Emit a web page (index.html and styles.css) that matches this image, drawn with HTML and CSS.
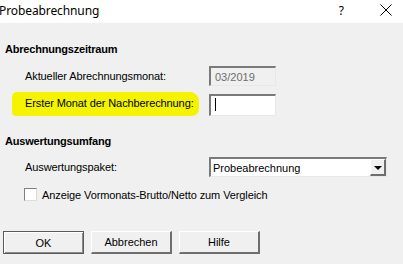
FILE: index.html
```html
<!DOCTYPE html>
<html lang="de">
<head>
<meta charset="utf-8">
<title>Probeabrechnung</title>
<link rel="stylesheet" href="styles.css">
</head>
<body>
<div class="dialog">
  <div class="titlebar">
    <span class="title">Probeabrechnung</span>
    <span class="help">?</span>
    <svg class="close" width="12" height="12" viewBox="0 0 12 12"><path d="M0.5 0.5 L11.5 11.5 M11.5 0.5 L0.5 11.5" stroke="#000" stroke-width="1" fill="none"/></svg>
  </div>
  <div class="content">
    <div class="group-title g1">Abrechnungszeitraum</div>
    <div class="row r1">
      <span class="label">Aktueller Abrechnungsmonat:</span>
      <div class="field disabled">03/2019</div>
    </div>
    <div class="row r2">
      <span class="label marked">Erster Monat der Nachberechnung:</span>
      <div class="field"><span class="caret"></span></div>
    </div>
    <div class="group-title g2">Auswertungsumfang</div>
    <div class="row r3">
      <span class="label">Auswertungspaket:</span>
      <div class="combo">
        <span class="combo-text">Probeabrechnung</span>
        <span class="combo-btn"><span class="arrow"></span></span>
      </div>
    </div>
    <div class="check-row">
      <span class="checkbox"></span>
      <span class="check-label">Anzeige Vormonats-Brutto/Netto zum Vergleich</span>
    </div>
    <div class="buttons">
      <button class="btn default">OK</button>
      <button class="btn">Abbrechen</button>
      <button class="btn">Hilfe</button>
    </div>
  </div>
</div>
</body>
</html>
```
FILE: styles.css
```css
* { box-sizing: border-box; }
html, body { margin: 0; padding: 0; }
body {
  width: 403px;
  height: 264px;
  overflow: hidden;
  background: #f0f0f0;
  font-family: "Liberation Sans", Arial, sans-serif;
  font-size: 11px;
  color: #000;
}
.dialog { width: 403px; height: 264px; }
.titlebar {
  height: 23px;
  background: #fff;
  display: flex;
  align-items: center;
}
.title {
  font-family: "Noto Sans", "Open Sans", sans-serif;
  font-size: 12px;
  margin-left: -1px;
  margin-top: -2px;
  letter-spacing: -0.1px;
}
.help {
  font-family: "Noto Sans", sans-serif;
  font-size: 12px;
  margin-left: auto;
  margin-right: 36px;
  margin-top: -3px;
}
.close { margin-right: 11px; margin-top: -3px; }
.content { padding: 20px 0 0 0; }
.group-title {
  font-weight: bold;
  line-height: 13px;
  padding-left: 5px;
  letter-spacing: -0.2px;
}
.row {
  display: grid;
  grid-template-columns: 209px auto;
  align-items: center;
  line-height: 13px;
}
.row .label { padding-left: 25px; letter-spacing: -0.1px; }
.r1 { margin-top: 10px; height: 20px; }
.r2 { margin-top: 8px; height: 21px; }
.g2 { margin-top: 20px; }
.r3 { margin-top: 9px; height: 20px; }
.field {
  width: 67px;
  height: 100%;
  border-style: solid;
  border-width: 2px 1px 1px 2px;
  border-color: #7a7a7a #e8e8e8 #e8e8e8 #7a7a7a;
  background: #fff;
  padding: 2px 0 0 4px;
  font-size: 11px;
  line-height: 14px;
}
.field.disabled { background: #f0f0f0; color: #6d6d6d; }
.caret {
  display: block;
  width: 1px;
  height: 13px;
  background: #000;
}
.label.marked {
  justify-self: start;
  margin-left: 12px;
  padding: 5px 5px 6px 13px;
  margin-top: -2px;
  background: #f4f400;
  border-radius: 5px 9px 7px 4px;
}
.combo {
  width: 178px;
  height: 100%;
  display: flex;
  border-style: solid;
  border-width: 2px 1px 1px 2px;
  border-color: #7a7a7a #e8e8e8 #e8e8e8 #7a7a7a;
  background: #fff;
}
.combo-text {
  flex: 1;
  padding: 2px 0 0 2px;
  font-size: 11px;
  line-height: 14px;
}
.combo-btn {
  width: 16px;
  height: 100%;
  background: #f0f0f0;
  border-style: solid;
  border-width: 1px 2px 2px 1px;
  border-color: #fff #6e6e6e #6e6e6e #fff;
  display: flex;
  align-items: center;
  justify-content: center;
}
.arrow {
  width: 0; height: 0;
  border-left: 4px solid transparent;
  border-right: 4px solid transparent;
  border-top: 4px solid #000;
  margin-top: 1px;
}
.check-row {
  margin-top: 11px;
  display: flex;
  align-items: center;
  padding-left: 24px;
  height: 13px;
  line-height: 13px;
}
.checkbox {
  width: 13px;
  height: 13px;
  background: #fff;
  border-style: solid;
  border-width: 1px;
  border-color: #808080 #dcdcdc #dcdcdc #808080;
  margin-right: 5px;
}
.check-label { margin-top: 2px; letter-spacing: -0.1px; }
.buttons {
  margin-top: 30px;
  display: flex;
  gap: 7px;
  padding-left: 3px;
}
.btn {
  width: 81px;
  height: 23px;
  font-family: "Liberation Sans", Arial, sans-serif;
  font-size: 11px;
  color: #000;
  background: #f0f0f0;
  border-style: solid;
  border-width: 1px 2px 2px 1px;
  border-color: #fff #6e6e6e #6e6e6e #fff;
  padding: 0;
  margin: 0;
}
.btn.default {
  border: 1px solid #5a5a5a;
  box-shadow: inset 1px 1px 0 #fff, inset -1px -1px 0 #8a8a8a;
}
```
